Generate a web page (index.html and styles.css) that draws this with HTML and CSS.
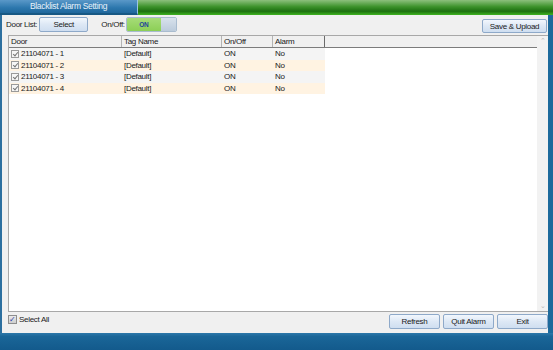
FILE: index.html
```
<!DOCTYPE html>
<html lang="en">
<head>
    <meta charset="UTF-8">
    <title>Blacklist Alarm Setting</title>
    <link rel="stylesheet" href="styles.css">
</head>
<body>
    <div class="window">
        <div class="titlebar">
            <div class="tab">Blacklist Alarm Setting</div>
            <div class="bar"></div>
        </div>
        <div class="main">
            <div class="toolbar">
                <span class="label">Door List:</span>
                <button class="btn btn-select">Select</button>
                <span class="label label-onoff">On/Off:</span>
                <div class="toggle">
                    <span class="toggle-on">ON</span>
                    <span class="toggle-off"></span>
                </div>
                <button class="btn btn-save">Save &amp; Upload</button>
            </div>
            <div class="list">
                <div class="grid">
                    <div class="row head">
                        <div class="cell c-door">Door</div>
                        <div class="cell c-tag">Tag Name</div>
                        <div class="cell c-on">On/Off</div>
                        <div class="cell c-alarm">Alarm</div>
                        <div class="cell c-fill"></div>
                    </div>
                    <div class="row odd">
                        <div class="cell c-door"><span class="chk"></span>21104071 - 1</div>
                        <div class="cell c-tag">[Default]</div>
                        <div class="cell c-on">ON</div>
                        <div class="cell c-alarm">No</div>
                    </div>
                    <div class="row even">
                        <div class="cell c-door"><span class="chk"></span>21104071 - 2</div>
                        <div class="cell c-tag">[Default]</div>
                        <div class="cell c-on">ON</div>
                        <div class="cell c-alarm">No</div>
                    </div>
                    <div class="row odd">
                        <div class="cell c-door"><span class="chk"></span>21104071 - 3</div>
                        <div class="cell c-tag">[Default]</div>
                        <div class="cell c-on">ON</div>
                        <div class="cell c-alarm">No</div>
                    </div>
                    <div class="row even">
                        <div class="cell c-door"><span class="chk"></span>21104071 - 4</div>
                        <div class="cell c-tag">[Default]</div>
                        <div class="cell c-on">ON</div>
                        <div class="cell c-alarm">No</div>
                    </div>
                </div>
                <div class="scroll">
                    <span class="arrow">&#8963;</span>
                    <span class="arrow">&#8964;</span>
                </div>
            </div>
            <div class="footer">
                <label class="selectall"><span class="box">&#10003;</span>Select All</label>
                <div class="actions">
                    <button class="btn btn-act">Refresh</button>
                    <button class="btn btn-act">Quit Alarm</button>
                    <button class="btn btn-act">Exit</button>
                </div>
            </div>
        </div>
        <div class="statusbar"></div>
    </div>
</body>
</html>
```
FILE: styles.css
```
* {
    box-sizing: border-box;
}
body {
    margin: 0;
    font-family: "Liberation Sans", Arial, sans-serif;
    font-size: 8px;
    letter-spacing: -0.3px;
    color: #1a1a1a;
    background: #1b6698;
}
.window {
    width: 553px;
    height: 350px;
    display: flex;
    flex-direction: column;
    overflow: hidden;
}
.titlebar {
    height: 15px;
    display: flex;
}
.tab {
    width: 138px;
    background: linear-gradient(#5a98c8, #2c77ad 60%, #1f679c);
    border-bottom: 2px solid #175884;
    border-right: 1px solid #9cc4e4;
    color: #e9f2fa;
    font-size: 8.5px;
    text-align: center;
    line-height: 13px;
}
.bar {
    flex: 1;
    background: linear-gradient(#8cc07c, #3c922a 45%, #1d7010 75%, #3fb420);
}
.main {
    flex: 1;
    background: #f0f0f0;
    border-left: 2px solid #2c6f9f;
    border-right: 5px solid #1d6a9c;
    display: flex;
    flex-direction: column;
    padding: 2px 0 0 4px;
}
.toolbar {
    height: 15px;
    display: flex;
    align-items: center;
}
.label {
    margin-right: 2px;
}
.label-onoff {
    margin-left: 13px;
    margin-right: 1px;
}
.btn {
    font-family: inherit;
    font-size: 8px;
    letter-spacing: -0.3px;
    color: #1a1a1a;
    background: linear-gradient(#f2f7fd, #dde8f5 50%, #cfdef0);
    border: 1px solid #8ea9c9;
    border-radius: 2px;
    height: 15px;
    padding: 0;
}
.btn-select {
    width: 49px;
}
.toggle {
    width: 51px;
    height: 15px;
    display: flex;
    border: 1px solid #a9bccf;
    border-radius: 2px;
    overflow: hidden;
}
.toggle-on {
    width: 34px;
    background: linear-gradient(#a6dc78, #8ccf56);
    color: #22459a;
    font-weight: bold;
    font-size: 6.5px;
    text-align: center;
    line-height: 13px;
}
.toggle-off {
    flex: 1;
    background: linear-gradient(#d8e2ec, #bccbdb);
}
.btn-save {
    margin-left: auto;
    margin-right: 1px;
    margin-top: 3px;
    width: 65px;
    height: 14px;
}
.list {
    margin-top: 3px;
    margin-left: 2px;
    height: 277px;
    display: flex;
    border: 1px solid #a8a8a8;
    border-right: none;
    background: #fff;
}
.grid {
    width: 528px;
}
.row {
    display: flex;
    width: 316px;
    height: 11.5px;
    line-height: 11.5px;
}
.row.head {
    width: auto;
    height: 12px;
    line-height: 12px;
    background: #f0f0f0;
    border-bottom: 1px solid #7c7c7c;
}
.row.odd {
    background: #f4f4f4;
}
.row.even {
    background: #fff3e2;
}
.cell {
    padding-left: 2px;
    white-space: nowrap;
    display: flex;
    align-items: center;
}
.head .cell {
    border-right: 1px solid #b4b4b4;
}
.head .c-alarm {
    border-right: 1px solid #6a6a6a;
}
.c-door {
    width: 113px;
}
.c-tag {
    width: 100px;
}
.c-on {
    width: 51px;
}
.c-alarm {
    width: 52px;
}
.c-fill {
    flex: 1;
    border-right: none !important;
}
.chk {
    width: 8px;
    height: 8px;
    border: 1px solid #9a9a9a;
    background: #f6f6f6;
    margin: 0 2px 0 0;
    position: relative;
}
.chk::after {
    content: "";
    position: absolute;
    left: 2px;
    top: 0;
    width: 2px;
    height: 4px;
    border: solid #777;
    border-width: 0 1px 1px 0;
    transform: rotate(40deg);
}
.scroll {
    width: 11px;
    background: #f2f2f2;
    display: flex;
    flex-direction: column;
    justify-content: space-between;
    align-items: center;
    color: #b8b8b8;
    font-size: 7px;
    padding: 1px 0;
}
.footer {
    height: 21px;
    display: flex;
    align-items: flex-start;
    padding: 2px 0 0 2px;
}
.selectall {
    display: flex;
    align-items: center;
    margin-top: 1px;
}
.box {
    width: 9px;
    height: 9px;
    border: 1px solid #8e8e8e;
    background: linear-gradient(#eaeaea, #cfcfcf);
    color: #2a3fa8;
    font-size: 8px;
    line-height: 7px;
    text-align: center;
    margin-right: 2px;
}
.actions {
    margin-left: auto;
    display: flex;
    gap: 3px;
}
.btn-act {
    width: 51px;
}
.statusbar {
    height: 17px;
    background: linear-gradient(#2d78aa, #1a6698 20%, #135a8c);
}
```
